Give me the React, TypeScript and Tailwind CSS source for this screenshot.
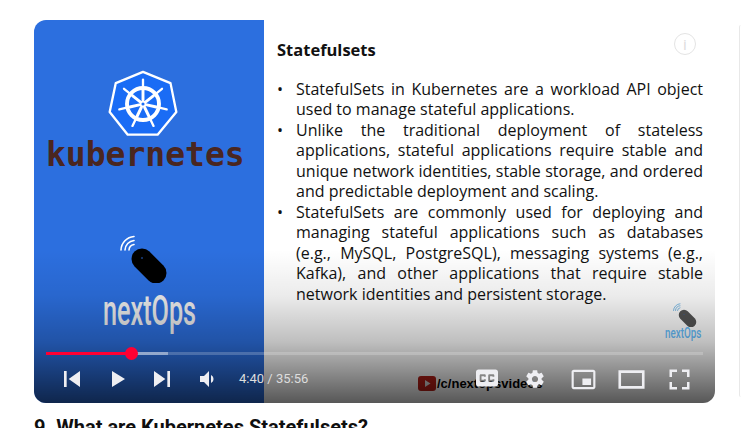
const bullets = [
  'StatefulSets in Kubernetes are a workload API object used to manage stateful applications.',
  'Unlike the traditional deployment of stateless applications, stateful applications require stable and unique network identities, stable storage, and ordered and predictable deployment and scaling.',
  'StatefulSets are commonly used for deploying and managing stateful applications such as databases (e.g., MySQL, PostgreSQL), messaging systems (e.g., Kafka), and other applications that require stable network identities and persistent storage.',
]

const settingsPath =
  'm 23.94,18.78 c .03,-0.25 .05,-0.51 .05,-0.78 0,-0.27 -0.02,-0.52 -0.05,-0.78 l 1.68,-1.32 c .15,-0.12 .19,-0.33 .09,-0.51 l -1.6,-2.76 c -0.09,-0.17 -0.31,-0.24 -0.48,-0.17 l -1.99,.8 c -0.41,-0.32 -0.86,-0.58 -1.35,-0.78 l -0.30,-2.12 c -0.02,-0.19 -0.19,-0.33 -0.39,-0.33 l -3.2,0 c -0.2,0 -0.36,.14 -0.39,.33 l -0.30,2.12 c -0.48,.2 -0.93,.47 -1.35,.78 l -1.99,-0.8 c -0.18,-0.07 -0.39,0 -0.48,.17 l -1.6,2.76 c -0.10,.17 -0.05,.39 .09,.51 l 1.68,1.32 c -0.03,.25 -0.05,.52 -0.05,.78 0,.26 .02,.52 .05,.78 l -1.68,1.32 c -0.15,.12 -0.19,.33 -0.09,.51 l 1.6,2.76 c .09,.17 .31,.24 .48,.17 l 1.99,-0.8 c .41,.32 .86,.58 1.35,.78 l .30,2.12 c .02,.19 .19,.33 .39,.33 l 3.2,0 c .2,0 .36,-0.14 .39,-0.33 l .30,-2.12 c .48,-0.2 .93,-0.47 1.35,-0.78 l 1.99,.8 c .18,.07 .39,0 .48,-0.17 l 1.6,-2.76 c .09,-0.17 .05,-0.39 -0.09,-0.51 l -1.68,-1.32 0,0 z m -5.94,2.01 c -1.54,0 -2.8,-1.25 -2.8,-2.8 0,-1.54 1.25,-2.8 2.8,-2.8 1.54,0 2.8,1.25 2.8,2.8 0,1.54 -1.25,2.8 -2.8,2.8 l 0,0 z'

function PlayerIcon({ d, size, className = '' }: { d: string; size: string; className?: string }) {
  return (
    <svg viewBox="0 0 36 36" className={`${size} shrink-0 ${className}`} fill="#eeeef2" fillRule="evenodd">
      <path d={d} />
    </svg>
  )
}

function HelmLogo() {
  const spokes = [0, 51.4, 102.8, 154.3, 205.7, 257.1, 308.6]
  return (
    <svg viewBox="0 0 72 70" className="w-[70px] h-[68px]">
      <path
        d="M36 2 L64.3 13.5 L70.3 43.3 L51 66.6 L20.3 66.6 L1.7 43.3 L8 13.5 Z"
        fill="#1a6cf5"
        stroke="#fff"
        strokeWidth="2.4"
        strokeLinejoin="round"
      />
      <g transform="translate(36 35)" stroke="#fff" fill="none" strokeLinecap="round">
        <circle r="16.5" strokeWidth="4" />
        <circle r="2.6" strokeWidth="2" />
        {spokes.map((a) => (
          <g key={a} transform={`rotate(${a})`}>
            <path d="M0 -4 L0 -14" strokeWidth="3" />
            <path d="M0 -16 L0 -25" strokeWidth="2.4" />
          </g>
        ))}
      </g>
    </svg>
  )
}

function MouseLogo({ small }: { small?: boolean }) {
  return (
    <svg viewBox="0 0 48 48" className={small ? 'w-[24px] h-[24px]' : 'w-[48px] h-[48px]'}>
      <path d="M22 24 L36 38" stroke={small ? '#555' : '#000'} strokeWidth="21" strokeLinecap="round" />
      <circle cx="22" cy="23" r="0.8" fill="#2c6fdf" />
      <g fill="none" stroke={small ? '#62aee3' : '#fff'} strokeWidth="1.6" strokeLinecap="round">
        <path d="M1 15 A14 14 0 0 1 14 1.5" />
        <path d="M5 15 A10 10 0 0 1 14 5.5" />
        <path d="M9 15 A6 6 0 0 1 14 9.5" />
      </g>
    </svg>
  )
}

export default function App() {
  return (
    <div className="h-[428px] w-[741px] overflow-hidden bg-white pt-5 pl-[34px]">
      <div className="flex items-start">
        <div className="relative flex h-[383px] w-[681px] shrink-0 overflow-hidden rounded-xl bg-white">
          <div className="flex w-[230px] shrink-0 flex-col bg-[#2c6fdf]">
            <div className="ml-[74px] mt-[50px]">
              <HelmLogo />
            </div>
            <div className="ml-[12px] mt-[-3px] font-['DejaVu_Sans_Mono',monospace] text-[33px] leading-[40px] font-bold text-[#4a2620]">
              kubernetes
            </div>
            <div className="ml-[86px] mt-[60px]">
              <MouseLogo />
            </div>
            <div className="mt-[7px] w-[150px] ml-[69px] origin-left scale-x-[0.6] font-['Roboto',sans-serif] text-[42px] leading-[42px] font-medium whitespace-nowrap text-[#f0f0f0]">
              nextOps
            </div>
          </div>

          <div className="relative flex-1 pl-[13px] pr-[12px] font-['Open_Sans',sans-serif] text-[#111]">
            <div className="mt-[19px] text-[16.5px] leading-[22px] font-bold">Statefulsets</div>
            <ul className="mt-[18px] text-[16px] leading-[20.45px]">
              {bullets.map((b) => (
                <li key={b} className="flex">
                  <span className="w-[19px] shrink-0">•</span>
                  <span className="flex-1 text-justify">{b}</span>
                </li>
              ))}
            </ul>
            <div className="absolute right-[19px] top-[13px] flex h-[22px] w-[22px] items-center justify-center rounded-full border border-[#e4e4e4] text-[15px] text-[#dcdcdc]">
              i
            </div>
            <div className="absolute right-[10px] top-[283px] flex w-[40px] flex-col items-center">
              <MouseLogo small />
              <div className="w-[56px] mt-[-1px] ml-[16px] origin-left scale-x-[0.7] font-['Roboto',sans-serif] text-[14px] leading-[14px] font-medium whitespace-nowrap text-[#66bfff]">
                nextOps
              </div>
            </div>
            <div className="absolute left-[154px] top-[356px] flex items-center gap-px">
              <svg viewBox="0 0 18 15" className="h-[15px] w-[18px]">
                <rect width="18" height="15" rx="3" fill="#b82018" />
                <path d="M7 4 L12.5 7.5 L7 11 Z" fill="#ddd" />
              </svg>
              <span className="font-['Liberation_Sans',sans-serif] text-[13px] leading-[15px] font-bold text-black">
                /c/nextopsvideos
              </span>
            </div>
          </div>

          <div className="absolute inset-x-0 bottom-0 h-[153px] bg-[linear-gradient(to_bottom,rgba(0,0,0,0),rgba(0,0,0,0.08)_30%,rgba(0,0,0,0.25)_60%,rgba(0,0,0,0.66))]" />

          <div className="absolute inset-x-0 bottom-0 px-3">
            <div className="relative h-[3px] bg-[rgba(255,255,255,0.2)]">
              <div className="absolute inset-y-0 left-0 w-[122px] bg-[rgba(255,255,255,0.4)]" />
              <div className="absolute inset-y-0 left-0 w-[86px] bg-[#ff0033]" />
              <div className="absolute left-[79px] top-[-5px] h-[13px] w-[13px] rounded-full bg-[#ff0033]" />
            </div>
            <div className="flex h-[48px] items-center">
              <PlayerIcon size="w-12 h-12" className="ml-[2px]" d="m 12,12 h 2 v 12 h -2 z m 3.5,6 8.5,6 V 12 z" />
              <PlayerIcon size="w-9 h-9" className="ml-[4px]" d="M 12,26 18.5,22 18.5,14 12,10 z M 18.5,22 25,18 25,18 18.5,14 z" />
              <PlayerIcon size="w-12 h-12" className="ml-[2px]" d="M 12,24 20.5,18 12,12 V 24 z M 22,12 v 12 h 2 V 12 h -2 z" />
              <PlayerIcon size="w-9 h-9" className="ml-[6px]" d="M8,21 L12,21 L17,26 L17,10 L12,15 L8,15 L8,21 Z M19,14 L19,22 C20.48,21.32 21.5,19.77 21.5,18 C21.5,16.26 20.48,14.74 19,14 Z" />
              <span className="ml-[11px] font-['Roboto',sans-serif] text-[13px] text-[#ddd]">4:40 / 35:56</span>
              <div className="ml-auto flex">
                <div className="flex w-12 justify-center">
                  <PlayerIcon size="w-11 h-11" d="M11,11 C9.89,11 9,11.9 9,13 L9,23 C9,24.1 9.89,25 11,25 L25,25 C26.1,25 27,24.1 27,23 L27,13 C27,11.9 26.1,11 25,11 L11,11 Z M17,17 L15.5,17 L15.5,16.5 L13.5,16.5 L13.5,19.5 L15.5,19.5 L15.5,19 L17,19 L17,20 C17,20.55 16.55,21 16,21 L13,21 C12.45,21 12,20.55 12,20 L12,16 C12,15.45 12.45,15 13,15 L16,15 C16.55,15 17,15.45 17,16 L17,17 L17,17 Z M24,17 L22.5,17 L22.5,16.5 L20.5,16.5 L20.5,19.5 L22.5,19.5 L22.5,19 L24,19 L24,20 C24,20.55 23.55,21 23,21 L20,21 C19.45,21 19,20.55 19,20 L19,16 C19,15.45 19.45,15 20,15 L23,15 C23.55,15 24,15.45 24,16 L24,17 L24,17 Z" />
                </div>
                <div className="flex w-12 items-center justify-center">
                  <PlayerIcon size="w-10 h-10" d={settingsPath} />
                </div>
                <div className="flex w-12 items-center justify-center">
                  <PlayerIcon size="w-[39px] h-[39px]" d="M25,17 L17,17 L17,23 L25,23 L25,17 L25,17 Z M29,25 L29,10.98 C29,9.88 28.1,9 27,9 L9,9 C7.9,9 7,9.88 7,10.98 L7,25 C7,26.1 7.9,27 9,27 L27,27 C28.1,27 29,26.1 29,25 L29,25 Z M27,25.02 L9,25.02 L9,10.97 L27,10.97 L27,25.02 L27,25.02 Z" />
                </div>
                <div className="flex w-12 items-center justify-center">
                  <PlayerIcon size="w-[47px] h-[47px]" d="m 28,11 0,14 -20,0 0,-14 z m -18,2 16,0 0,10 -16,0 0,-10 z" />
                </div>
                <div className="flex w-12 items-center justify-center">
                  <PlayerIcon size="w-[45px] h-[45px]" d="m 10,16 2,0 0,-4 4,0 0,-2 L 10,10 l 0,6 0,0 z M 20,10 l 0,2 4,0 0,4 2,0 L 26,10 l -6,0 0,0 z M 24,24 l -4,0 0,2 L 26,26 l 0,-6 -2,0 0,4 0,0 z M 12,20 10,20 10,26 l 6,0 0,-2 -4,0 0,-4 0,0 z" />
                </div>
              </div>
            </div>
          </div>
        </div>
        <div className="ml-6 mt-[5px] h-[372px] w-[2px] shrink-0 rounded-l border-l border-[#e8e8e8]" />
      </div>
      <h1 className="mt-[10px] font-['Roboto',sans-serif] text-[20px] leading-[28px] font-bold whitespace-nowrap text-[#0f0f0f]">
        9. What are Kubernetes Statefulsets?
      </h1>
    </div>
  )
}
